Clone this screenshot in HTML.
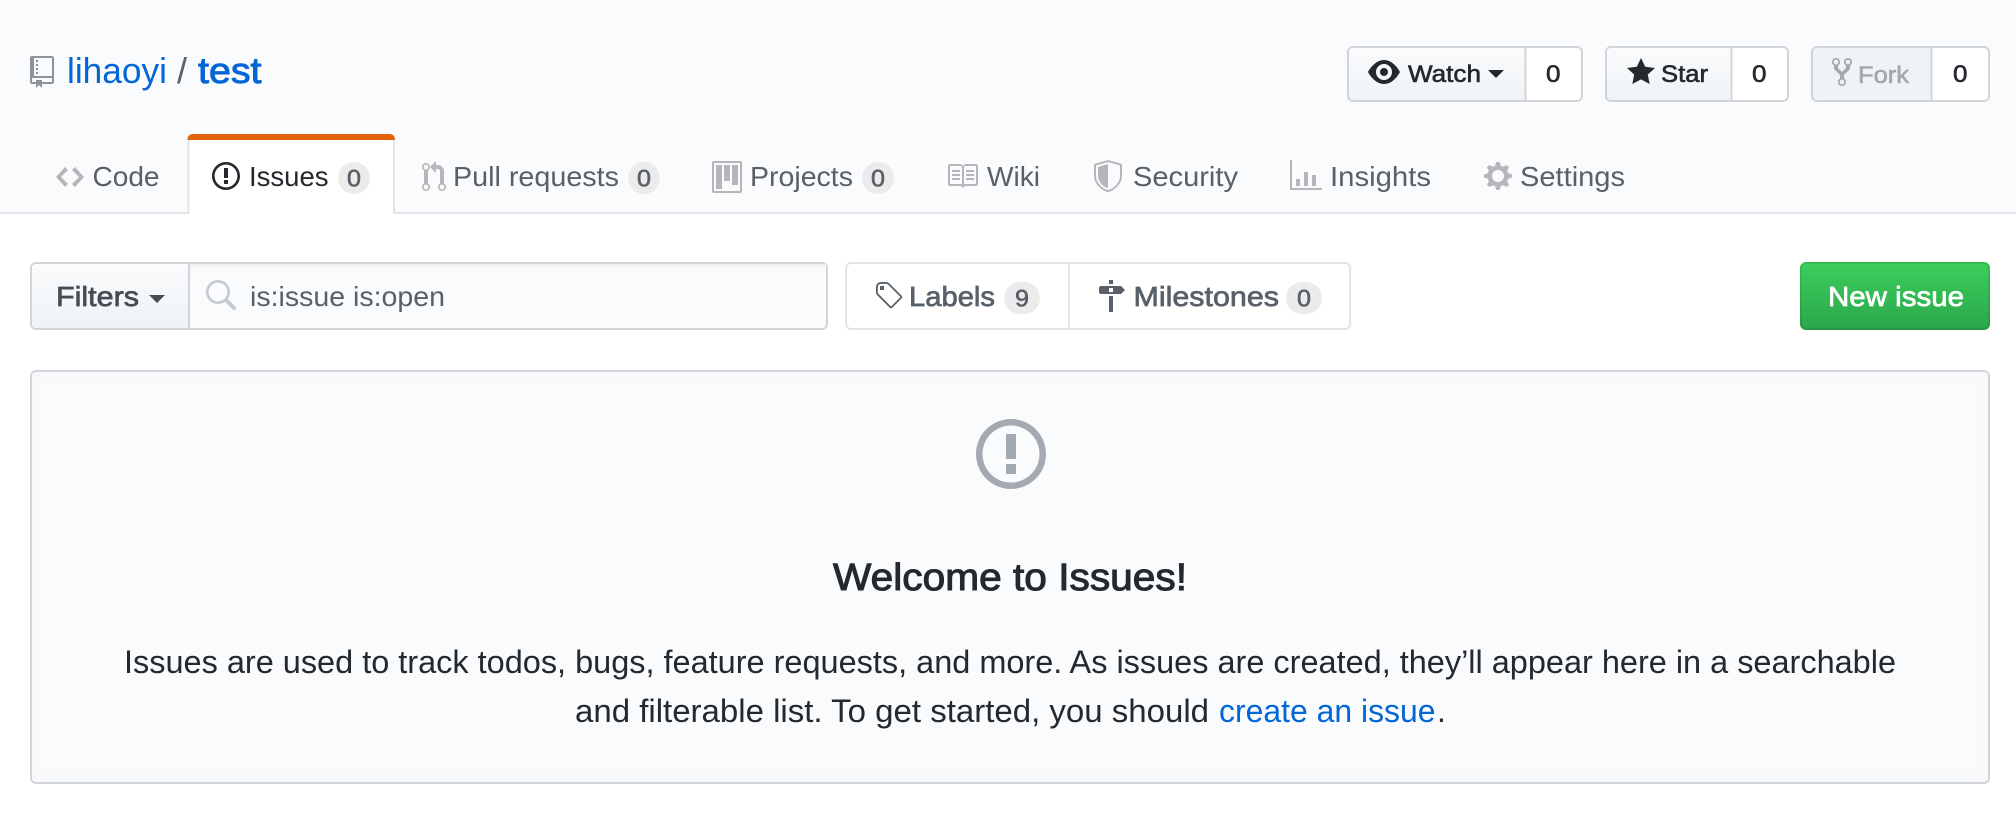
<!DOCTYPE html>
<html lang="en">
<head>
<meta charset="utf-8">
<title>Issues · lihaoyi/test</title>
<style>
html,body{margin:0;padding:0;background:#fff;width:2016px;height:824px;overflow:hidden}
svg{display:block}
text{font-family:"Liberation Sans",Arial,sans-serif}
path{fill-rule:evenodd}
.tab{font-size:28px;fill:#586069}
.cnt{font-size:24px;fill:#586069;stroke:#586069;stroke-width:.6px}
.btn{font-size:24px;fill:#24292e;stroke:#24292e;stroke-width:.6px}
.num{font-size:24px;fill:#24292e;stroke:#24292e;stroke-width:.6px}
.fl{font-size:28px;fill:#586069;stroke:#586069;stroke-width:.7px}
.ic{fill:#b4b6b9}
.p{font-size:32px;fill:#24292e}
</style>
</head>
<body>
<svg width="2016" height="824" viewBox="0 0 2016 824" xmlns="http://www.w3.org/2000/svg">
<defs>
<linearGradient id="g" x1="0" y1="0" x2="0" y2="1"><stop offset="0" stop-color="#fafbfc"/><stop offset="1" stop-color="#eff3f6"/></linearGradient>
<linearGradient id="gr" x1="0" y1="0" x2="0" y2="1"><stop offset="0" stop-color="#3ccf5c"/><stop offset="1" stop-color="#2aa64a"/></linearGradient>
<clipPath id="bc"><rect x="31" y="371" width="1958" height="412" rx="5"/></clipPath>
<filter id="bl" x="-5%" y="-10%" width="110%" height="120%"><feGaussianBlur stdDeviation="8"/></filter>
</defs>

<!-- header -->
<rect x="0" y="0" width="2016" height="213" fill="#fafbfc"/>
<rect x="0" y="212" width="2016" height="2" fill="#e1e4e8"/>

<!-- repo title -->
<path fill="#8d9399" transform="translate(30,56) scale(2)" d="M4 9H3V8h1v1zm0-3H3v1h1V6zm0-2H3v1h1V4zm0-2H3v1h1V2zm8-1v12c0 .55-.45 1-1 1H6v2l-1.5-1.5L3 16v-2H1c-.55 0-1-.45-1-1V1c0-.55.45-1 1-1h10c.55 0 1 .45 1 1zm-1 10H1v2h2v-1h3v1h5v-2zm0-10H2v9h9V1z"/>
<text x="67" y="83" font-size="36" fill="#0366d6" textLength="100" lengthAdjust="spacingAndGlyphs">lihaoyi</text>
<text x="177" y="83" font-size="36" fill="#586069">/</text>
<text x="198" y="83" font-size="36" fill="#0366d6" stroke="#0366d6" stroke-width=".9" textLength="63.5" lengthAdjust="spacingAndGlyphs">test</text>

<!-- Watch -->
<rect x="1348" y="47" width="234" height="54" rx="5" fill="#fff" stroke="#d1d5da" stroke-width="2"/>
<path d="M1525 48H1353a4 4 0 0 0-4 4v44a4 4 0 0 0 4 4H1525z" fill="url(#g)"/>
<rect x="1524.5" y="47" width="2" height="54" fill="#d1d5da"/>
<path fill="#24292e" transform="translate(1368,56) scale(2)" d="M8.06 2C3 2 0 8 0 8s3 6 8.06 6C13 14 16 8 16 8s-3-6-7.94-6zM8 12c-2.2 0-4-1.78-4-4 0-2.2 1.8-4 4-4 2.22 0 4 1.8 4 4 0 2.22-1.78 4-4 4zm2-4c0 1.11-.89 2-2 2-1.11 0-2-.89-2-2 0-1.11.89-2 2-2 1.11 0 2 .89 2 2z"/>
<text class="btn" x="1408" y="82" textLength="73" lengthAdjust="spacingAndGlyphs">Watch</text>
<polygon points="1488,70 1504,70 1496,78" fill="#24292e"/>
<text class="num" x="1546" y="82" textLength="14.5" lengthAdjust="spacingAndGlyphs">0</text>

<!-- Star -->
<rect x="1606" y="47" width="182" height="54" rx="5" fill="#fff" stroke="#d1d5da" stroke-width="2"/>
<path d="M1731 48H1611a4 4 0 0 0-4 4v44a4 4 0 0 0 4 4H1731z" fill="url(#g)"/>
<rect x="1730.5" y="47" width="2" height="54" fill="#d1d5da"/>
<path fill="#24292e" transform="translate(1627,56) scale(2)" d="M14 6l-4.9-.64L7 1 4.9 5.36 0 6l3.6 3.26L2.67 14 7 11.67 11.33 14l-.93-4.74L14 6z"/>
<text class="btn" x="1661" y="82" textLength="47" lengthAdjust="spacingAndGlyphs">Star</text>
<text class="num" x="1752" y="82" textLength="14.5" lengthAdjust="spacingAndGlyphs">0</text>

<!-- Fork -->
<rect x="1812" y="47" width="177" height="54" rx="5" fill="#fff" stroke="#d1d5da" stroke-width="2"/>
<path d="M1931 48H1817a4 4 0 0 0-4 4v44a4 4 0 0 0 4 4H1931z" fill="#f0f3f6"/>
<rect x="1930.5" y="47" width="2" height="54" fill="#d1d5da"/>
<path fill="#a3a8ad" transform="translate(1832,56) scale(2)" d="M8 1a1.993 1.993 0 0 0-1 3.72V6L5 8 3 6V4.72A1.993 1.993 0 0 0 2 1a1.993 1.993 0 0 0-1 3.72V6.5l3 3v1.78A1.993 1.993 0 0 0 5 15a1.993 1.993 0 0 0 1-3.72V9.5l3-3V4.72A1.993 1.993 0 0 0 8 1zM2 4.2C1.34 4.2.8 3.65.8 3c0-.65.55-1.2 1.2-1.2.65 0 1.2.55 1.2 1.2 0 .65-.55 1.2-1.2 1.2zm3 10c-.66 0-1.2-.55-1.2-1.2 0-.65.55-1.2 1.2-1.2.65 0 1.2.55 1.2 1.2 0 .65-.55 1.2-1.2 1.2zm3-10c-.66 0-1.2-.55-1.2-1.2 0-.65.55-1.2 1.2-1.2.65 0 1.2.55 1.2 1.2 0 .65-.55 1.2-1.2 1.2z"/>
<text class="btn" style="fill:#a3a8ad;stroke:#a3a8ad" x="1858" y="83" textLength="51" lengthAdjust="spacingAndGlyphs">Fork</text>
<text class="num" x="1953" y="82" textLength="14.5" lengthAdjust="spacingAndGlyphs">0</text>

<!-- tabs -->
<path d="M187.5 214V140a6 6 0 0 1 6-6h195.500a6 6 0 0 1 6 6v74z" fill="#fff"/>
<path d="M188.500 214V138M394 214V138" stroke="#e1e4e8" stroke-width="2" fill="none"/>
<path d="M187.500 140v-1a5 5 0 0 1 5-5h197.500a5 5 0 0 1 5 5v1z" fill="#e36209"/>

<path class="ic" transform="translate(56,161) scale(2)" d="M9.5 3L8 4.5 11.5 8 8 11.5 9.5 13 14 8 9.5 3zm-5 0L0 8l4.5 5L6 11.5 2.5 8 6 4.5 4.5 3z"/>
<text class="tab" x="92.500" y="186" textLength="67" lengthAdjust="spacingAndGlyphs">Code</text>

<path fill="#24292e" transform="translate(212,160) scale(2)" d="M7 2.3c3.14 0 5.7 2.56 5.7 5.7s-2.56 5.7-5.7 5.700A5.71 5.71 0 0 1 1.300 8c0-3.14 2.56-5.7 5.7-5.7zM7 1C3.14 1 0 4.14 0 8s3.14 7 7 7 7-3.14 7-7-3.14-7-7-7zm1 3H6v5h2V4zm0 6H6v2h2v-2z"/>
<text class="tab" style="fill:#24292e" x="249" y="186" textLength="79.5" lengthAdjust="spacingAndGlyphs">Issues</text>
<rect x="338" y="162" width="32" height="32" rx="16" fill="#ebebec"/>
<text class="cnt" x="347" y="186.5" textLength="14" lengthAdjust="spacingAndGlyphs">0</text>

<path class="ic" transform="translate(422,161) scale(2)" d="M11 11.28V5c-.03-.78-.34-1.47-.94-2.06C9.46 2.35 8.78 2.03 8 2H7V0L4 3l3 3V4h1c.27.02.48.11.69.31.21.2.3.42.31.69v6.28A1.993 1.993 0 0 0 10 15a1.993 1.993 0 0 0 1-3.72zm-1 2.92c-.66 0-1.2-.55-1.2-1.2 0-.65.55-1.2 1.2-1.2.65 0 1.2.55 1.2 1.2 0 .65-.55 1.2-1.2 1.2zM4 3c0-1.11-.89-2-2-2a1.993 1.993 0 0 0-1 3.72v6.56A1.993 1.993 0 0 0 2 15a1.993 1.993 0 0 0 1-3.72V4.72c.59-.34 1-.98 1-1.72zm-.8 10c0 .66-.55 1.2-1.2 1.2-.65 0-1.2-.55-1.2-1.2 0-.65.55-1.2 1.2-1.2.65 0 1.2.55 1.2 1.2zM2 4.2C1.34 4.2.8 3.65.8 3c0-.65.55-1.2 1.2-1.2.65 0 1.2.55 1.2 1.2 0 .65-.55 1.2-1.2 1.2z"/>
<text class="tab" x="453" y="186" textLength="166" lengthAdjust="spacingAndGlyphs">Pull requests</text>
<rect x="628" y="162" width="32" height="32" rx="16" fill="#ebebec"/>
<text class="cnt" x="637" y="186.5" textLength="14" lengthAdjust="spacingAndGlyphs">0</text>

<path class="ic" transform="translate(712,161) scale(2)" d="M10 12h3V2h-3v10zm-4-2h3V2H6v8zm-4 4h3V2H2v12zm-1 1h13V1H1v14zM14 0H1a1 1 0 0 0-1 1v14a1 1 0 0 0 1 1h13a1 1 0 0 0 1-1V1a1 1 0 0 0-1-1z"/>
<text class="tab" x="750" y="186" textLength="103" lengthAdjust="spacingAndGlyphs">Projects</text>
<rect x="862" y="162" width="32" height="32" rx="16" fill="#ebebec"/>
<text class="cnt" x="871" y="186.5" textLength="14" lengthAdjust="spacingAndGlyphs">0</text>

<path class="ic" transform="translate(946,160) scale(2)" d="M3 5h4v1H3V5zm0 3h4V7H3v1zm0 2h4V9H3v1zm11-5h-4v1h4V5zm0 2h-4v1h4V7zm0 2h-4v1h4V9zm2-6v9c0 .55-.45 1-1 1H9.5l-1 1-1-1H2c-.55 0-1-.45-1-1V3c0-.55.45-1 1-1h5.5l1 1 1-1H15c.55 0 1 .45 1 1zm-8 .5L7.5 3H2v9h6V3.5zm7-.5H9.5l-.5.5V12h6V3z"/>
<text class="tab" x="987" y="186" textLength="53" lengthAdjust="spacingAndGlyphs">Wiki</text>

<path class="ic" transform="translate(1094,160) scale(2)" d="M0 2l7-2 7 2v6.02C14 12.69 8.69 16 7 16c-1.69 0-7-3.31-7-7.98V2zm1 .75L7 1l6 1.75v5.268C13 12.104 8.449 15 7 15c-1.449 0-6-2.896-6-6.982V2.750zm1 .75L7 2v12c-1.207 0-5-2.482-5-5.985V3.5z"/>
<text class="tab" x="1133" y="186" textLength="105" lengthAdjust="spacingAndGlyphs">Security</text>

<path class="ic" transform="translate(1290,160) scale(2)" d="M16 14v1H0V0h1v14h15zM5 13H3V9.500h2V13zm4 0H7V6h2v7zm4 0h-2V7.500h2V13z"/>
<text class="tab" x="1330" y="186" textLength="101" lengthAdjust="spacingAndGlyphs">Insights</text>

<path class="ic" transform="translate(1484,160) scale(2)" d="M14 8.77v-1.6l-1.94-.64-.45-1.09.88-1.84-1.13-1.13-1.81.91-1.09-.45-.69-1.92h-1.6l-.63 1.94-1.11.45-1.84-.88-1.13 1.13.91 1.81-.45 1.09L0 7.23v1.59l1.94.64.45 1.09-.88 1.84 1.13 1.13 1.81-.91 1.09.45.69 1.92h1.59l.63-1.94 1.11-.45 1.84.88 1.13-1.13-.92-1.81.47-1.09L14 8.75v.02zM7 11c-1.66 0-3-1.34-3-3s1.34-3 3-3 3 1.34 3 3-1.34 3-3 3z"/>
<text class="tab" x="1520" y="186" textLength="105" lengthAdjust="spacingAndGlyphs">Settings</text>

<!-- filters + search -->
<rect x="31" y="263" width="796" height="66" rx="5" fill="#fafbfc" stroke="#d1d5da" stroke-width="2"/>
<rect x="190" y="264" width="636" height="3" fill="#f0f1f3"/>
<path d="M189 264H36a4 4 0 0 0-4 4v56a4 4 0 0 0 4 4H189z" fill="url(#g)"/>
<rect x="188" y="263" width="2" height="66" fill="#d1d5da"/>
<text x="56" y="306" font-size="28" fill="#444d56" stroke="#444d56" stroke-width=".7" textLength="83" lengthAdjust="spacingAndGlyphs">Filters</text>
<polygon points="149,295 165,295 157,303" fill="#444d56"/>
<path fill="#c6cbd1" transform="translate(204,280) scale(2)" d="M15.7 13.3l-3.81-3.83A5.93 5.93 0 0 0 13 6c0-3.31-2.69-6-6-6S1 2.69 1 6s2.69 6 6 6c1.3 0 2.48-.41 3.47-1.11l3.83 3.81c.19.2.45.3.7.3.25 0 .52-.09.7-.3a.996.996 0 0 0 0-1.41v.01zM7 10.7c-2.59 0-4.7-2.11-4.7-4.7 0-2.59 2.11-4.7 4.7-4.7 2.59 0 4.7 2.11 4.7 4.7 0 2.59-2.11 4.7-4.7 4.7z"/>
<text x="250" y="306" font-size="28" fill="#586069" textLength="195" lengthAdjust="spacingAndGlyphs">is:issue is:open</text>

<!-- labels + milestones -->
<rect x="846" y="263" width="504" height="66" rx="5" fill="#fff" stroke="#e1e4e8" stroke-width="2"/>
<rect x="1068" y="263" width="2" height="66" fill="#e1e4e8"/>
<path fill="#586069" transform="translate(874,280) scale(2)" d="M7.730 1.730C7.26 1.26 6.62 1 5.96 1H3.5C2.13 1 1 2.13 1 3.5v2.47c0 .66.27 1.3.73 1.77l6.06 6.06c.39.39 1.02.39 1.41 0l4.59-4.59a.996.996 0 0 0 0-1.41L7.73 1.73zM2.38 7.09c-.31-.3-.47-.7-.47-1.13V3.5c0-.88.72-1.59 1.59-1.59h2.47c.42 0 .83.16 1.13.47l6.14 6.13-4.73 4.73-6.13-6.15zM3.01 3h2v2H3V3h.01z"/>
<text class="fl" x="909" y="306" textLength="86" lengthAdjust="spacingAndGlyphs">Labels</text>
<rect x="1004" y="282" width="36" height="32" rx="16" fill="#ebebec"/>
<text class="cnt" x="1015" y="306.5" textLength="14" lengthAdjust="spacingAndGlyphs">9</text>
<path fill="#586069" transform="translate(1097,280) scale(2)" d="M8 2H6V0h2v2zm4 5H2c-.55 0-1-.45-1-1V4c0-.55.45-1 1-1h10l2 2-2 2zM8 4H6v2h2V4zM6 16h2V8H6v8z"/>
<text class="fl" x="1133.5" y="306" textLength="145.5" lengthAdjust="spacingAndGlyphs">Milestones</text>
<rect x="1286" y="282" width="36" height="32" rx="16" fill="#ebebec"/>
<text class="cnt" x="1297" y="306.5" textLength="14" lengthAdjust="spacingAndGlyphs">0</text>

<!-- new issue -->
<rect x="1800" y="262" width="190" height="68" rx="6" fill="url(#gr)"/>
<rect x="1801" y="263" width="188" height="66" rx="5" fill="none" stroke="#1b1f23" stroke-opacity=".1" stroke-width="2"/>
<text x="1828" y="306" font-size="28" fill="#fff" stroke="#fff" stroke-width=".7" textLength="136" lengthAdjust="spacingAndGlyphs">New issue</text>

<!-- blankslate -->
<rect x="31" y="371" width="1958" height="412" rx="5" fill="#fafbfc"/>
<g clip-path="url(#bc)"><rect x="31" y="371" width="1958" height="412" rx="5" fill="none" stroke="#1b1f23" stroke-opacity=".025" stroke-width="8" filter="url(#bl)"/></g>
<rect x="31" y="371" width="1958" height="412" rx="5" fill="none" stroke="#d1d5da" stroke-width="2"/>
<path fill="#a3aab1" transform="translate(976,414) scale(5)" d="M7 2.3c3.14 0 5.7 2.56 5.7 5.7s-2.56 5.7-5.7 5.7A5.71 5.71 0 0 1 1.3 8c0-3.14 2.56-5.7 5.7-5.7zM7 1C3.14 1 0 4.14 0 8s3.14 7 7 7 7-3.14 7-7-3.14-7-7-7zm1 3H6v5h2V4zm0 6H6v2h2v-2z"/>
<text x="833" y="590" font-size="38" fill="#24292e" stroke="#24292e" stroke-width="1" textLength="354" lengthAdjust="spacingAndGlyphs">Welcome to Issues!</text>
<text class="p" x="124" y="673" textLength="1772" lengthAdjust="spacingAndGlyphs">Issues are used to track todos, bugs, feature requests, and more. As issues are created, they’ll appear here in a searchable</text>
<text class="p" x="575" y="722" textLength="634" lengthAdjust="spacingAndGlyphs">and filterable list. To get started, you should</text>
<text class="p" style="fill:#0366d6" x="1219" y="722" textLength="216.5" lengthAdjust="spacingAndGlyphs">create an issue</text>
<text class="p" x="1437" y="722">.</text>
</svg>
</body>
</html>
